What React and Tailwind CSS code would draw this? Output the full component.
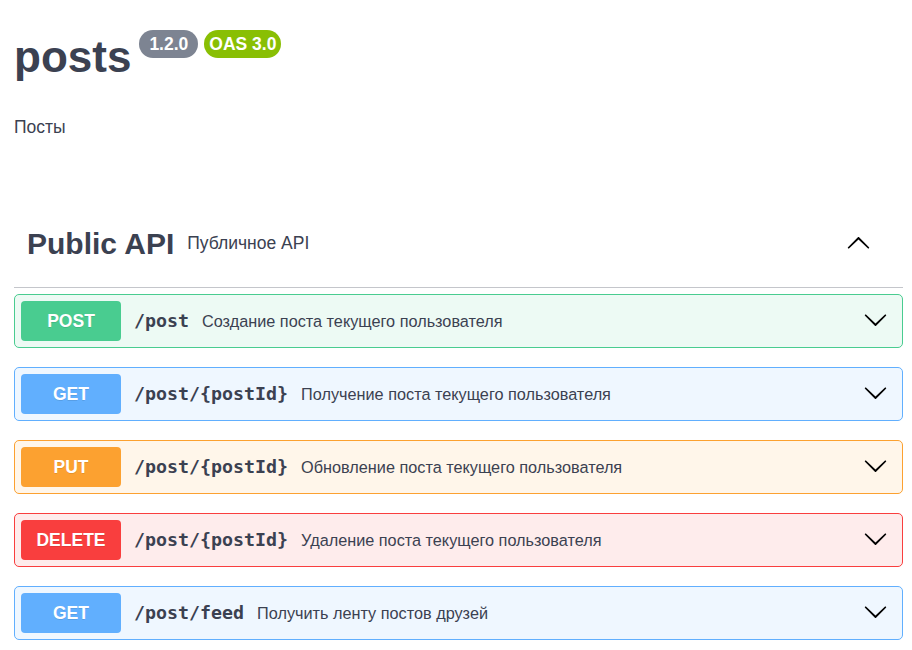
import React from "react";

const ops = [
  { method: "POST", path: "/post", summary: "Создание поста текущего пользователя", color: "post" },
  { method: "GET", path: "/post/{postId}", summary: "Получение поста текущего пользователя", color: "get" },
  { method: "PUT", path: "/post/{postId}", summary: "Обновление поста текущего пользователя", color: "put" },
  { method: "DELETE", path: "/post/{postId}", summary: "Удаление поста текущего пользователя", color: "delete" },
  { method: "GET", path: "/post/feed", summary: "Получить ленту постов друзей", color: "get" },
];

// full class names so tailwind picks them up
const styles = {
  post: { row: "bg-[#edfaf4] border-[#49cc90]", label: "bg-[#49cc90]" },
  get: { row: "bg-[#eff7ff] border-[#61affe]", label: "bg-[#61affe]" },
  put: { row: "bg-[#fff6ea] border-[#fca130]", label: "bg-[#fca130]" },
  delete: { row: "bg-[#feecec] border-[#f93e3e]", label: "bg-[#f93e3e]" },
};

const arrowPath =
  "M17.418 6.109c.272-.268.709-.268.979 0s.271.701 0 .969l-7.908 7.83c-.27.268-.707.268-.979 0l-7.908-7.83c-.27-.268-.27-.701 0-.969.271-.268.709-.268.979 0L10 13.25l7.418-7.141z";

const Arrow = ({ up = false }) => (
  <svg width="25" height="25" viewBox="0 0 20 20" aria-hidden="true" className={up ? "rotate-180" : ""}>
    <path fill="#000" d={arrowPath} />
  </svg>
);

const OpRow = ({ op }) => {
  const s = styles[op.color];
  return (
    <div className={`flex items-center h-[54px] border rounded-[5px] px-[6px] mb-[19px] ${s.row}`}>
      <span
        className={`w-[100px] h-[40px] rounded-[4px] flex items-center justify-center text-white font-bold text-[17.5px] [text-shadow:0_1px_0_rgba(0,0,0,0.1)] ${s.label}`}
      >
        {op.method}
      </span>
      <span className="ml-[13px] font-['DejaVu_Sans_Mono',monospace] font-bold text-[18.3px] text-[#3b4151]">
        {op.path}
      </span>
      <span className="ml-[13px] text-[16.25px] text-[#3b4151]">{op.summary}</span>
      <span className="ml-auto mr-[8px] mb-[3px] flex">
        <Arrow />
      </span>
    </div>
  );
};

export default function App() {
  return (
    <div className="min-h-screen bg-white pl-[14px] pr-[9px] font-['Liberation_Sans',Arial,sans-serif] text-[#3b4151]">
      {/* Info */}
      <div className="pt-[32px] flex items-start">
        <h2 className="text-[44px] leading-[50px] font-bold">posts</h2>
        <span className="ml-[8px] -mt-[2px] w-[59px] h-[28px] rounded-full bg-[#7d8492] text-white font-bold text-[17.5px] flex items-center justify-center">
          1.2.0
        </span>
        <span className="ml-[6px] -mt-[2px] w-[77px] h-[28px] rounded-full bg-[#89bf04] text-white font-bold text-[17.5px] flex items-center justify-center">
          OAS 3.0
        </span>
      </div>
      <p className="mt-[33px] text-[17.5px] leading-[24px]">Посты</p>

      {/* Tag section */}
      <div className="mt-[60px] h-[89px] flex items-center border-b border-[#c4c6cb] pl-[13px] pr-[32px]">
        <h3 className="text-[30px] font-bold">Public API</h3>
        <span className="ml-[13px] text-[17.5px]">Публичное API</span>
        <span className="ml-auto flex">
          <Arrow up />
        </span>
      </div>

      <div className="mt-[6px]">
        {ops.map((op, i) => (
          <OpRow key={i} op={op} />
        ))}
      </div>
    </div>
  );
}
